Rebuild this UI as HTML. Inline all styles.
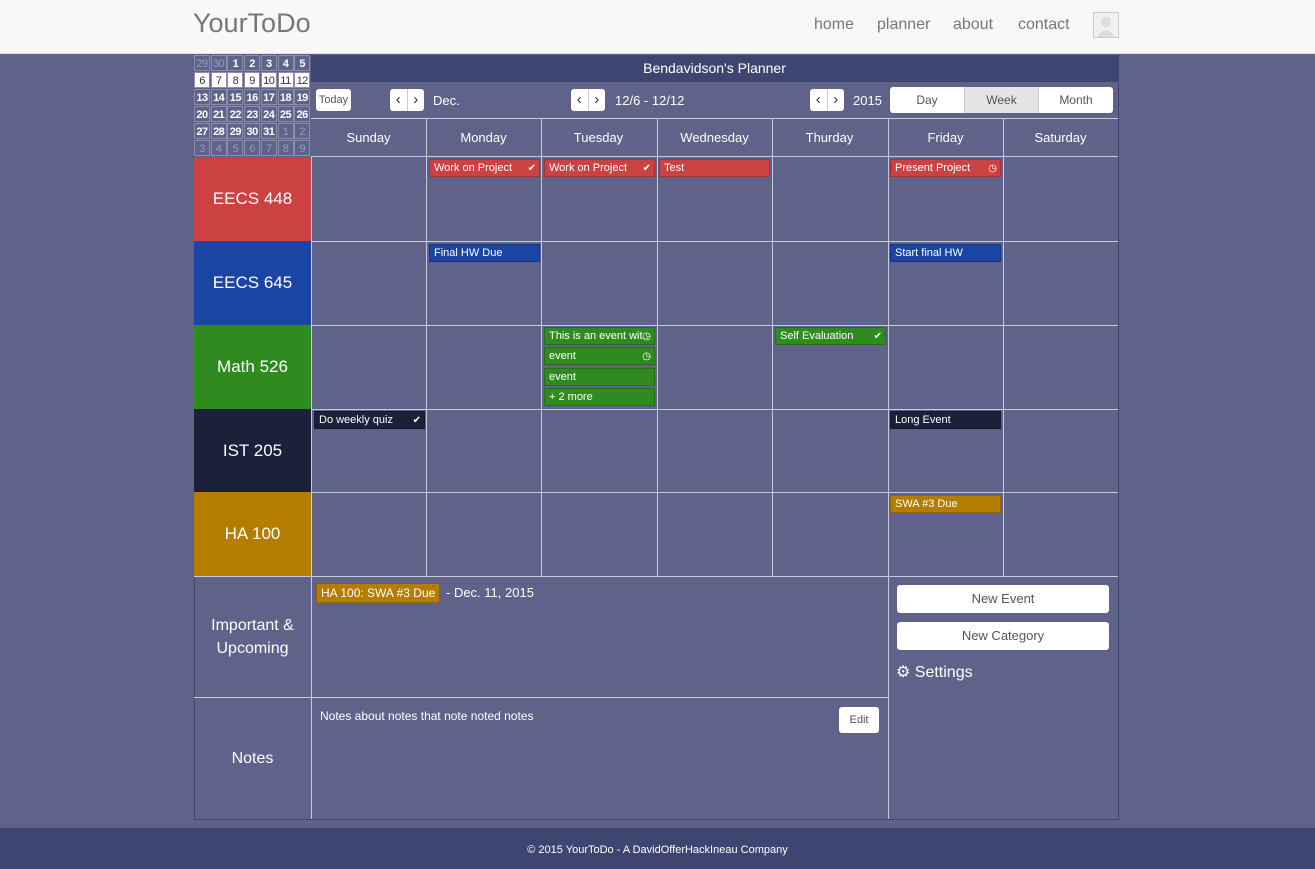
<!DOCTYPE html>
<html><head><meta charset="utf-8"><style>
*{box-sizing:border-box;margin:0;padding:0}
html,body{width:1315px;height:869px;overflow:hidden}
body{background:#5f6389;font-family:"Liberation Sans",sans-serif;position:relative;color:#fff}
.a{position:absolute}
.nav{left:0;top:0;width:1315px;height:54px;background:#f8f8f8;border-bottom:1px solid #e0e0e0}
.logo{left:193px;top:8px;font-size:27px;color:#777}
.nl{top:16px;font-size:16px;color:#777}
.av{left:1093px;top:12px;width:26px;height:26px;border:1px solid #ccc;background:#f0f0f0}
.title{left:311px;top:55px;width:807px;height:27px;background:#3f4571;text-align:center;font-size:14px;line-height:27px}
.grid{left:194px;top:55px;width:925px;height:765px;border:1px solid #3f4571}
.mc{left:194px;top:55px;width:117px;height:102px}
.mc div{position:absolute;width:16px;height:16px;font-size:11px;text-align:center;line-height:16px;font-weight:bold;color:#fff;background:#5f6389;border:1px solid #8a8eac;letter-spacing:-0.5px}
.mc div.w{background:#fff;color:#333;font-weight:normal}
.mc div.g{color:#9a9db6;font-weight:normal}
.btn{background:#fff;color:#555;border-radius:3px;font-size:12px;text-align:center}
.ar{background:#fff;color:#333;border-radius:3px;width:34px;height:22px;display:flex}
.ar span{flex:1;text-align:center;font-size:15px;line-height:21px}
.ar span:first-child{border-right:1px solid #ccc}
.vl{width:1px;background:#c8cade}
.hl{height:1px;background:#c8cade}
.dh{top:119px;height:37px;line-height:37px;width:115px;text-align:center;font-size:13px}
.cat{left:194px;width:117px;height:84px;font-size:17px;text-align:center;line-height:84px}
.ev{height:18px;font-size:11px;line-height:17px;padding-left:4px;padding-right:14px;border:1px solid rgba(0,0,0,.2);width:111px;white-space:nowrap;overflow:hidden}
.ic{position:absolute;right:3px;top:0;font-size:10px}
.r{background:#cc4142}.b{background:#1b45a3}.gr{background:#2f8b1f}.k{background:#1a2139}.o{background:#b47d00}
.foot{left:0;top:828px;width:1315px;height:41px;background:#3f4571;text-align:center;font-size:11px;line-height:44px}
</style></head><body>
<div class="a nav"></div>
<div class="a logo">YourToDo</div>
<div class="a nl" style="left:814px">home</div>
<div class="a nl" style="left:877px">planner</div>
<div class="a nl" style="left:953px">about</div>
<div class="a nl" style="left:1018px">contact</div>
<div class="a av"><svg width="24" height="24"><circle cx="12" cy="9" r="5" fill="#ddd"/><path d="M3 24 Q12 11 21 24Z" fill="#ddd"/></svg></div>

<div class="a grid"></div>
<div class="a title">Bendavidson's Planner</div>

<div class="a mc" id="mc"></div>

<div class="a btn" style="left:316px;top:89px;width:35px;height:22px;line-height:22px;font-size:11px">Today</div>
<div class="a ar" style="left:390px;top:89px"><span>‹</span><span>›</span></div>
<div class="a" style="left:433px;top:93px;font-size:13px">Dec.</div>
<div class="a ar" style="left:571px;top:89px"><span>‹</span><span>›</span></div>
<div class="a" style="left:615px;top:93px;font-size:13px">12/6 - 12/12</div>
<div class="a ar" style="left:810px;top:89px"><span>‹</span><span>›</span></div>
<div class="a" style="left:853px;top:93px;font-size:13px">2015</div>
<div class="a btn" style="left:890px;top:87px;width:223px;height:26px"></div>
<div class="a" style="left:964px;top:87px;width:75px;height:26px;background:#e4e4e4;border-left:1px solid #ccc;border-right:1px solid #ccc"></div>
<div class="a" style="left:890px;top:93px;width:74px;text-align:center;font-size:12px;color:#555">Day</div>
<div class="a" style="left:964px;top:93px;width:75px;text-align:center;font-size:12px;color:#555">Week</div>
<div class="a" style="left:1039px;top:93px;width:74px;text-align:center;font-size:12px;color:#555">Month</div>

<div class="a hl" style="left:311px;top:118px;width:807px"></div>
<div class="a hl" style="left:311px;top:156px;width:807px"></div>
<div class="a hl" style="left:311px;top:241px;width:807px"></div>
<div class="a hl" style="left:311px;top:325px;width:807px"></div>
<div class="a hl" style="left:311px;top:409px;width:807px"></div>
<div class="a hl" style="left:311px;top:492px;width:807px"></div>
<div class="a hl" style="left:194px;top:576px;width:924px"></div>
<div class="a hl" style="left:194px;top:697px;width:694px"></div>
<div class="a vl" style="left:311px;top:157px;height:662px"></div>
<div class="a vl" style="left:426px;top:119px;height:457px"></div>
<div class="a vl" style="left:541px;top:119px;height:457px"></div>
<div class="a vl" style="left:657px;top:119px;height:457px"></div>
<div class="a vl" style="left:772px;top:119px;height:457px"></div>
<div class="a vl" style="left:888px;top:119px;height:700px"></div>
<div class="a vl" style="left:1003px;top:119px;height:457px"></div>

<div class="a dh" style="left:311px">Sunday</div>
<div class="a dh" style="left:426px">Monday</div>
<div class="a dh" style="left:541px">Tuesday</div>
<div class="a dh" style="left:657px">Wednesday</div>
<div class="a dh" style="left:772px">Thurday</div>
<div class="a dh" style="left:888px">Friday</div>
<div class="a dh" style="left:1003px">Saturday</div>

<div class="a cat r" style="top:157px">EECS 448</div>
<div class="a cat b" style="top:241px">EECS 645</div>
<div class="a cat gr" style="top:325px">Math 526</div>
<div class="a cat k" style="top:409px">IST 205</div>
<div class="a cat o" style="top:492px">HA 100</div>

<div class="a ev r" style="left:429px;top:159px">Work on Project<span class="ic">✔</span></div>
<div class="a ev r" style="left:544px;top:159px">Work on Project<span class="ic">✔</span></div>
<div class="a ev r" style="left:659px;top:159px">Test</div>
<div class="a ev r" style="left:890px;top:159px">Present Project<span class="ic">◷</span></div>
<div class="a ev b" style="left:429px;top:244px">Final HW Due</div>
<div class="a ev b" style="left:890px;top:244px">Start final HW</div>
<div class="a ev gr" style="left:544px;top:327px">This is an event wit..<span class="ic">◷</span></div>
<div class="a ev gr" style="left:544px;top:347px">event<span class="ic">◷</span></div>
<div class="a ev gr" style="left:544px;top:368px">event</div>
<div class="a ev gr" style="left:544px;top:388px">+ 2 more</div>
<div class="a ev gr" style="left:775px;top:327px">Self Evaluation<span class="ic">✔</span></div>
<div class="a ev k" style="left:314px;top:411px">Do weekly quiz<span class="ic">✔</span></div>
<div class="a ev k" style="left:890px;top:411px">Long Event</div>
<div class="a ev o" style="left:890px;top:495px">SWA #3 Due</div>

<div class="a" style="left:194px;top:614px;width:117px;text-align:center;font-size:16px;line-height:23px">Important &amp;<br>Upcoming</div>
<div class="a o" style="left:316px;top:583px;width:124px;height:20px;font-size:12px;line-height:19px;padding:0 4px;white-space:nowrap;overflow:hidden;border:1px solid rgba(0,0,0,.2)">HA 100: SWA #3 Due</div>
<div class="a" style="left:446px;top:585px;font-size:13px">- Dec. 11, 2015</div>
<div class="a" style="left:194px;top:750px;width:117px;text-align:center;font-size:16px">Notes</div>
<div class="a" style="left:320px;top:709px;font-size:12px">Notes about notes that note noted notes</div>
<div class="a btn" style="left:839px;top:707px;width:40px;height:26px;line-height:26px;font-size:11px">Edit</div>
<div class="a btn" style="left:897px;top:585px;width:212px;height:28px;line-height:28px;font-size:13px">New Event</div>
<div class="a btn" style="left:897px;top:622px;width:212px;height:28px;line-height:28px;font-size:13px">New Category</div>
<div class="a" style="left:896px;top:662px;font-size:16px">⚙ Settings</div>

<div class="a foot">© 2015 YourToDo - A DavidOfferHackIneau Company</div>
<script>
var d=[[29,30,1,2,3,4,5],[6,7,8,9,10,11,12],[13,14,15,16,17,18,19],[20,21,22,23,24,25,26],[27,28,29,30,31,1,2],[3,4,5,6,7,8,9]];
var h='';for(var r=0;r<6;r++)for(var c=0;c<7;c++){var cl='';if(r==1)cl='w';if((r==0&&c<2)||(r==4&&c>4)||r==5)cl='g';h+='<div class="'+cl+'" style="left:'+(c*16.7)+'px;top:'+(r*17)+'px">'+d[r][c]+'</div>';}
document.getElementById('mc').innerHTML=h;
</script>
</body></html>
